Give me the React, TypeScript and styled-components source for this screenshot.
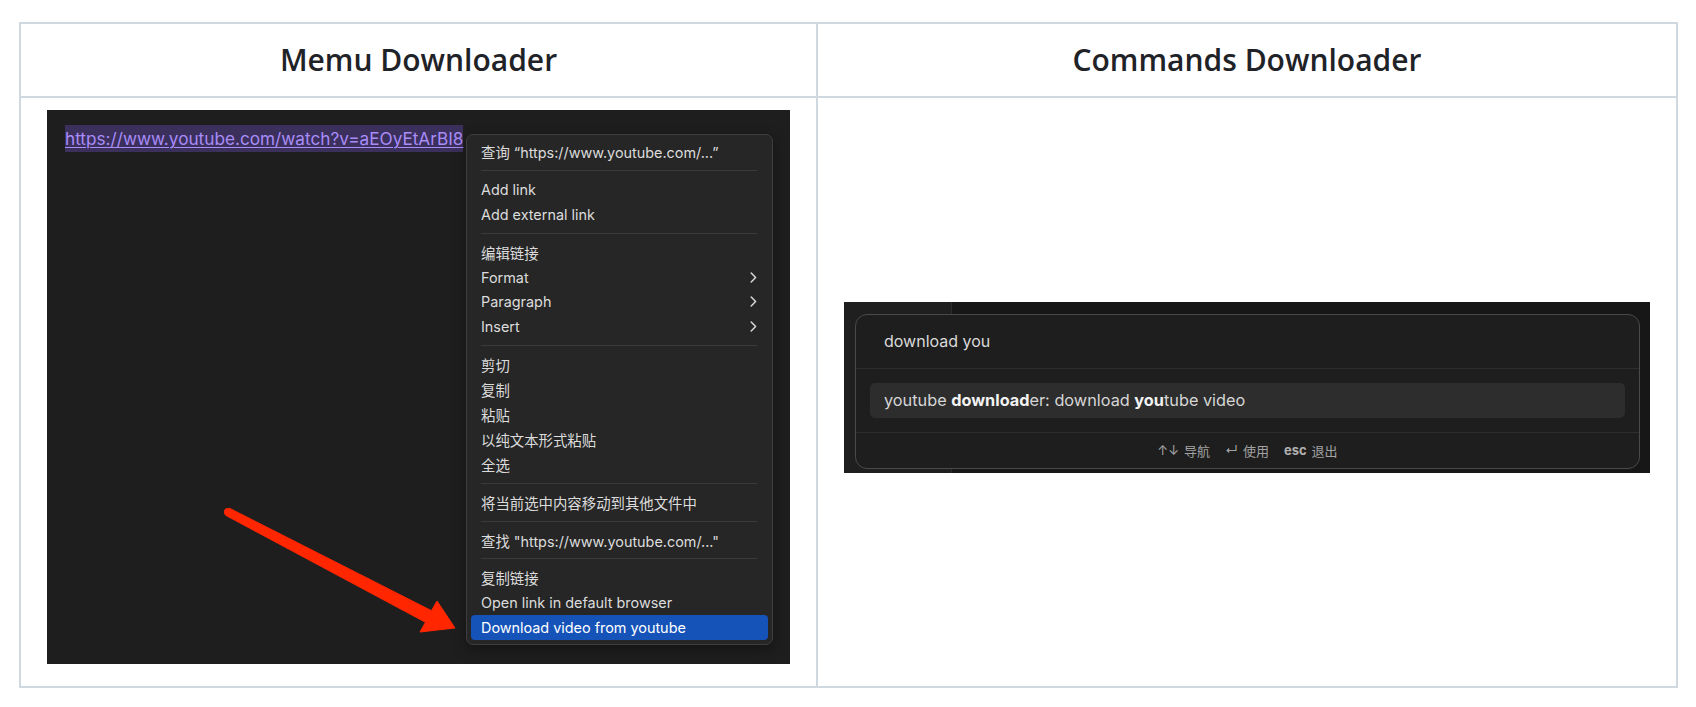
import React from "react";
import styled, { createGlobalStyle } from "styled-components";

const Global = createGlobalStyle`
  html, body { margin: 0; padding: 0; background: #ffffff; }
  body { font-family: "Noto Sans", "Liberation Sans", sans-serif; }
`;

const Page = styled.div`
  padding: 22px 0 0 19px;
`;

const Table = styled.table`
  border-collapse: separate;
  border-spacing: 0;
  border-top: 2px solid #d1d9e0;
  border-left: 2px solid #d1d9e0;
`;

const HeadCell = styled.th`
  padding: 12px 26px;
  border-right: 2px solid #d1d9e0;
  border-bottom: 2px solid #d1d9e0;
  font-family: "Open Sans", "Noto Sans", sans-serif;
  font-weight: 600;
  font-size: 30px;
  line-height: 48px;
  color: #1f2328;
  text-align: center;
`;

const BodyCell = styled.td`
  padding: 12px 26px;
  border-right: 2px solid #d1d9e0;
  border-bottom: 2px solid #d1d9e0;
  vertical-align: middle;
`;

const MacFont = `"Inter", "Noto Sans CJK SC", sans-serif`;

/* ---------- left screenshot ---------- */

const MenuShot = styled.div`
  position: relative;
  width: 743px;
  height: 554px;
  margin-bottom: 10px;
  background: #1e1e1e;
  overflow: hidden;
  padding: 15px 0 0 18px;
  box-sizing: border-box;
`;

const UrlLine = styled.span`
  display: inline-block;
  background: #3b2f5c;
  color: #a88cf8;
  font-family: ${MacFont};
  font-size: 17.2px;
  line-height: 27px;
  text-decoration: underline;
  text-decoration-thickness: 1px;
  text-underline-offset: 2px;
  white-space: nowrap;
`;

const Menu = styled.div`
  position: absolute;
  left: 419px;
  top: 24px;
  width: 307px;
  box-sizing: border-box;
  padding: 4px 4px 4px;
  background: #262626;
  border: 1px solid #3e3e3e;
  border-radius: 7px;
  box-shadow: 0 4px 14px rgba(0, 0, 0, 0.35);
  display: flex;
  flex-direction: column;
`;

const MenuItem = styled.div<{ $active?: boolean }>`
  height: 24.9px;
  padding: 0 11px 0 10px;
  display: flex;
  align-items: center;
  justify-content: space-between;
  border-radius: 4px;
  font-family: ${MacFont};
  font-size: 14.4px;
  color: ${(p) => (p.$active ? "#ffffff" : "#dcdcdc")};
  background: ${(p) => (p.$active ? "#1653b9" : "transparent")};
  white-space: nowrap;
`;

const MenuSep = styled.div`
  height: 1px;
  margin: 6px 11px 6px 10px;
  background: #3a3a3a;
`;

const ArrowLayer = styled.svg`
  position: absolute;
  left: 0;
  top: 0;
  pointer-events: none;
`;

const Chevron = () => (
  <svg width="7" height="11" viewBox="0 0 7 11" fill="none">
    <path d="M1.2 1 L5.6 5.5 L1.2 10" stroke="#d8d8d8" strokeWidth="1.5" strokeLinecap="round" strokeLinejoin="round" />
  </svg>
);

type Entry = { label?: string; sub?: boolean; active?: boolean; sep?: boolean };

const menuEntries: Entry[] = [
  { label: "查询 “https://www.youtube.com/...”" },
  { sep: true },
  { label: "Add link" },
  { label: "Add external link" },
  { sep: true },
  { label: "编辑链接" },
  { label: "Format", sub: true },
  { label: "Paragraph", sub: true },
  { label: "Insert", sub: true },
  { sep: true },
  { label: "剪切" },
  { label: "复制" },
  { label: "粘贴" },
  { label: "以纯文本形式粘贴" },
  { label: "全选" },
  { sep: true },
  { label: "将当前选中内容移动到其他文件中" },
  { sep: true },
  { label: "查找 \"https://www.youtube.com/...\"" },
  { sep: true },
  { label: "复制链接" },
  { label: "Open link in default browser" },
  { label: "Download video from youtube", active: true },
];

/* ---------- right screenshot ---------- */

const PaletteShot = styled.div`
  width: 806px;
  height: 171px;
  margin-bottom: 10px;
  box-sizing: border-box;
  padding: 12px 10px 0 11px;
  background: linear-gradient(
    to right,
    #1f1f1f 0,
    #1f1f1f 107px,
    #2b2b2b 107px,
    #2b2b2b 108px,
    #171717 108px
  );
`;

const Palette = styled.div`
  height: 155px;
  box-sizing: border-box;
  border: 1px solid #4a4a4a;
  border-radius: 12px;
  background: #1e1e1e;
  display: flex;
  flex-direction: column;
  font-family: ${MacFont};
`;

const PromptRow = styled.div`
  height: 53px;
  flex: none;
  border-bottom: 1px solid #2d2d2d;
  display: flex;
  align-items: center;
  padding-left: 28px;
  font-size: 16px;
  color: #dadada;
`;

const Results = styled.div`
  padding: 14px;
  border-bottom: 1px solid #2d2d2d;
`;

const ResultRow = styled.div`
  height: 35px;
  border-radius: 5px;
  background: #2d2d2d;
  display: flex;
  align-items: center;
  padding-left: 14px;
  font-size: 16.3px;
  color: #d6d6d6;
  b { font-weight: 700; color: #f2f2f2; }
`;

const Footer = styled.div`
  flex: 1;
  display: flex;
  align-items: center;
  justify-content: center;
  gap: 15px;
  font-size: 13px;
  color: #a2a2a2;
`;

const Hint = styled.span`
  display: inline-flex;
  align-items: center;
  gap: 5px;
  b { font-weight: 700; color: #b0b0b0; }
`;

export default function App() {
  return (
    <>
      <Global />
      <Page>
        <Table>
          <thead>
            <tr>
              <HeadCell>Memu Downloader</HeadCell>
              <HeadCell>Commands Downloader</HeadCell>
            </tr>
          </thead>
          <tbody>
            <tr>
              <BodyCell>
                <MenuShot>
                  <UrlLine>https://www.youtube.com/watch?v=aEOyEtArBI8</UrlLine>
                  <Menu>
                    {menuEntries.map((e, i) =>
                      e.sep ? (
                        <MenuSep key={i} />
                      ) : (
                        <MenuItem key={i} $active={e.active}>
                          <span>{e.label}</span>
                          {e.sub && <Chevron />}
                        </MenuItem>
                      )
                    )}
                  </Menu>
                  <ArrowLayer width="743" height="554" viewBox="0 0 743 554">
                    <polygon
                      points="182.8,398.4 384.5,500.7 390,491 408,518 373,522 378.5,512.3 179.2,405.6"
                      fill="#ff2600"
                      stroke="#ff2600"
                      strokeWidth="1"
                      strokeLinejoin="round"
                    />
                    <circle cx="181" cy="402" r="4" fill="#ff2600" />
                  </ArrowLayer>
                </MenuShot>
              </BodyCell>
              <BodyCell>
                <PaletteShot>
                  <Palette>
                    <PromptRow>download you</PromptRow>
                    <Results>
                      <ResultRow>
                        <span>
                          youtube <b>download</b>er: download <b>you</b>tube video
                        </span>
                      </ResultRow>
                    </Results>
                    <Footer>
                      <Hint>
                        <span>↑↓</span>
                        <span>导航</span>
                      </Hint>
                      <Hint>
                        <span>↵</span>
                        <span>使用</span>
                      </Hint>
                      <Hint>
                        <b>esc</b>
                        <span>退出</span>
                      </Hint>
                    </Footer>
                  </Palette>
                </PaletteShot>
              </BodyCell>
            </tr>
          </tbody>
        </Table>
      </Page>
    </>
  );
}
